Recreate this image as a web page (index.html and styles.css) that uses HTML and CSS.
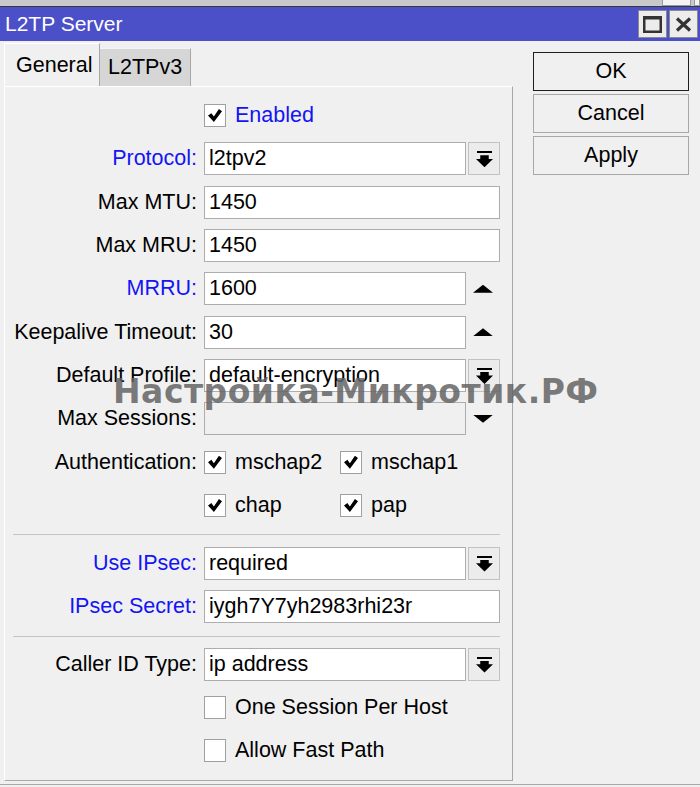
FILE: index.html
```html
<!DOCTYPE html>
<html lang="en">
<head>
    <meta charset="UTF-8">
    <title>L2TP Server</title>
    <link rel="stylesheet" href="styles.css">
</head>
<body>
    <div class="desk">
        <div class="behind"></div>
        <div class="behind small"></div>
    </div>
    <div class="titlebar">
        <span class="title">L2TP Server</span>
        <div class="winbtns">
            <div class="winbtn">
                <svg width="19" height="17" viewBox="0 0 19 17"><rect x="1.25" y="1.5" width="16.5" height="14.25" fill="none" stroke="#333" stroke-width="2.5"/><rect x="0" y="0" width="19" height="3.5" fill="#333"/></svg>
            </div>
            <div class="winbtn">
                <svg width="17" height="15" viewBox="0 0 17 15"><path d="M2 1.5 L15 13.5 M15 1.5 L2 13.5" stroke="#333" stroke-width="3.2" fill="none"/></svg>
            </div>
        </div>
    </div>

    <div class="main">
        <div class="left">
            <div class="tabs">
                <div class="tab active">General</div>
                <div class="tab">L2TPv3</div>
            </div>
            <div class="panel">
                <div class="row">
                    <div class="label"></div>
                    <div class="check on"><span class="box"></span><span class="blue">Enabled</span></div>
                </div>
                <div class="row">
                    <div class="label blue">Protocol:</div>
                    <div class="field short">l2tpv2</div>
                    <div class="dropbtn"></div>
                </div>
                <div class="row">
                    <div class="label">Max MTU:</div>
                    <div class="field">1450</div>
                </div>
                <div class="row">
                    <div class="label">Max MRU:</div>
                    <div class="field">1450</div>
                </div>
                <div class="row">
                    <div class="label blue">MRRU:</div>
                    <div class="field short">1600</div>
                    <div class="spin up"></div>
                </div>
                <div class="row">
                    <div class="label">Keepalive Timeout:</div>
                    <div class="field short">30</div>
                    <div class="spin up"></div>
                </div>
                <div class="row">
                    <div class="label">Default Profile:</div>
                    <div class="field short">default-encryption</div>
                    <div class="dropbtn"></div>
                </div>
                <div class="row">
                    <div class="label">Max Sessions:</div>
                    <div class="field short off"></div>
                    <div class="spin down"></div>
                </div>
                <div class="row">
                    <div class="label">Authentication:</div>
                    <div class="check on wide"><span class="box"></span>mschap2</div>
                    <div class="check on"><span class="box"></span>mschap1</div>
                </div>
                <div class="row">
                    <div class="label"></div>
                    <div class="check on wide"><span class="box"></span>chap</div>
                    <div class="check on"><span class="box"></span>pap</div>
                </div>
                <div class="sep"></div>
                <div class="row">
                    <div class="label blue">Use IPsec:</div>
                    <div class="field short">required</div>
                    <div class="dropbtn"></div>
                </div>
                <div class="row">
                    <div class="label blue">IPsec Secret:</div>
                    <div class="field">iygh7Y7yh2983rhi23r</div>
                </div>
                <div class="sep second"></div>
                <div class="row">
                    <div class="label">Caller ID Type:</div>
                    <div class="field short">ip address</div>
                    <div class="dropbtn"></div>
                </div>
                <div class="row">
                    <div class="label"></div>
                    <div class="check"><span class="box"></span>One Session Per Host</div>
                </div>
                <div class="row">
                    <div class="label"></div>
                    <div class="check"><span class="box"></span>Allow Fast Path</div>
                </div>

                <!-- site watermark lying over the form -->
                <div class="watermark">Настройка-Микротик.РФ</div>
            </div>
        </div>
        <div class="actions">
            <div class="btn default">OK</div>
            <div class="btn">Cancel</div>
            <div class="btn">Apply</div>
        </div>
    </div>
    <div class="bottomline"></div>
</body>
</html>
```

FILE: styles.css
```css
html, body { margin: 0; padding: 0; }
body {
    width: 700px;
    height: 787px;
    overflow: hidden;
    background: #f0f0f0;
    font-family: "Liberation Sans", Arial, sans-serif;
    font-size: 21.5px;
    color: #000;
}

/* strip of the desktop behind the window */
.desk {
    height: 6px;
    background: #c9c9c9;
    border-bottom: 1px solid #3a3a3a;
    display: flex;
    justify-content: flex-end;
    gap: 3px;
}
.behind { width: 27px; height: 5px; background: #f4f4f4; border: 1px solid #9a9a9a; border-top: 0; }
.behind.small { width: 4px; }

.titlebar {
    height: 34px;
    background: #4b50c8;
    display: flex;
    align-items: center;
    justify-content: space-between;
    padding-left: 5px;
}
.title { color: #fff; margin-top: -1px; font-size: 21px; }
.winbtns { display: flex; gap: 2px; align-self: flex-start; margin-top: 3px; padding-right: 2px; }
.winbtn {
    width: 27px;
    height: 26px;
    background: #ececec;
    border: 1px solid #8a8a8a;
    display: flex;
    align-items: center;
    justify-content: center;
}

.main { display: flex; }
.left { margin-left: 4px; width: 509px; }

.tabs { display: flex; align-items: flex-end; height: 43px; margin-top: 2px; }
.tab {
    box-sizing: border-box;
    height: 38px;
    padding: 0 8px;
    background: #d6d6d6;
    border-top: 1px solid #f4f4f4;
    border-right: 1px solid #a8a8a8;
    display: flex;
    align-items: center;
}
.tab.active {
    position: relative;
    height: 44px;
    margin-bottom: -1px;
    padding: 0 11px;
    width: 96px;
    background: #f0f0f0;
    border-left: 1px solid #fff;
    border-top: 1px solid #fff;
    border-right: 1px solid #a8a8a8;
}

.panel {
    position: relative;
    box-sizing: border-box;
    height: 695px;
    border-top: 1px solid #fff;
    border-left: 1px solid #fff;
    border-right: 1px solid #a8a8a8;
    border-bottom: 1px solid #a8a8a8;
    padding-top: 12px;
    display: flex;
    flex-direction: column;
    gap: 10.33px;
}

.row { display: flex; align-items: center; height: 33px; }
.label { width: 192px; text-align: right; margin-right: 7px; white-space: nowrap; }
.blue { color: #1414f5; }

.field {
    box-sizing: border-box;
    width: 296px;
    height: 33px;
    background: #fff;
    border: 1px solid #adadad;
    padding-left: 4px;
    line-height: 31px;
    white-space: nowrap;
}
.field.short { width: 262px; }
.field.off { background: #f0f0f0; }

.dropbtn {
    box-sizing: border-box;
    width: 32px;
    height: 33px;
    margin-left: 2px;
    background: #ececec;
    border: 1px solid #c2c2c2;
    position: relative;
}
/* bar + arrow of the drop-down button */
.dropbtn::before {
    content: "";
    position: absolute;
    left: 8px;
    top: 8px;
    width: 15px;
    height: 2px;
    background: #000;
}
.dropbtn::after {
    content: "";
    position: absolute;
    left: 7px;
    top: 12px;
    width: 17px;
    height: 12px;
    background: #000;
    clip-path: polygon(25% 0, 75% 0, 75% 30%, 100% 30%, 50% 100%, 0 30%, 25% 30%);
}

.spin { width: 34px; height: 33px; display: flex; align-items: center; justify-content: center; }
.spin::before {
    content: "";
    width: 20px;
    height: 8px;
    background: #000;
}
.spin.up::before { clip-path: polygon(50% 0, 100% 100%, 0 100%); }
.spin.down::before { clip-path: polygon(0 0, 100% 0, 50% 100%); }

.check { display: flex; align-items: center; white-space: nowrap; }
.check.wide { width: 136px; }
.box {
    box-sizing: border-box;
    width: 22px;
    height: 23px;
    margin-right: 9px;
    background: #fff;
    border: 1px solid #a0a0a0;
    position: relative;
}
.check.on .box::after {
    content: "";
    position: absolute;
    left: 3px;
    top: 4px;
    width: 14px;
    height: 13px;
    background: #000;
    clip-path: polygon(0 50%, 24% 32%, 42% 58%, 78% 0, 100% 18%, 42% 100%);
}

.sep { height: 1px; background: #c4c4c4; margin: 2px 12px 1px 8px; }
.sep.second { margin: 3px 12px 0 8px; }

.watermark {
    position: absolute;
    left: 108px;
    top: 285px;
    font-family: "DejaVu Sans", sans-serif;
    font-weight: 700;
    font-size: 33px;
    letter-spacing: 0.5px;
    color: rgba(100, 100, 100, 0.85);
    white-space: nowrap;
}

.actions { margin-left: 20px; padding-top: 11px; display: flex; flex-direction: column; gap: 3px; }
.btn {
    box-sizing: border-box;
    width: 156px;
    height: 39px;
    border: 1px solid #a8a8a8;
    background: #f0f0f0;
    display: flex;
    align-items: center;
    justify-content: center;
}
.btn.default { border-color: #1e1e1e; }

.bottomline { height: 1px; margin-top: 3px; background: #a8a8a8; }
```
